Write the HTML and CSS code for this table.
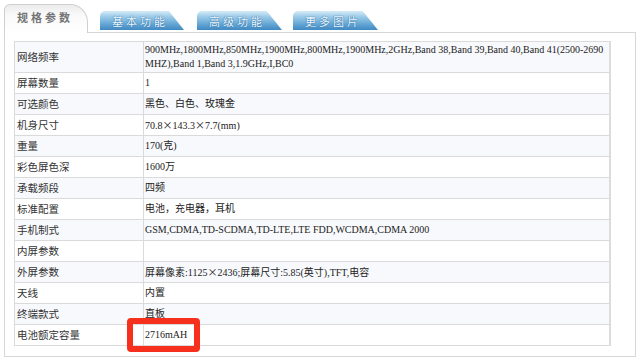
FILE: index.html
```html
<!DOCTYPE html>
<html lang="zh">
<head>
<meta charset="utf-8">
<link rel="stylesheet" href="styles.css">
</head>
<body>
<div class="page">
  <div class="tabs">
    <div class="tab tab-active">规格参数</div>
    <div class="tab tab-blue tab-1">基本功能</div>
    <div class="tab tab-blue tab-2">高级功能</div>
    <div class="tab tab-blue tab-3">更多图片</div>
  </div>
  <div class="panel">
    <table class="spec">
      <tr class="tall"><th>网络频率</th><td>900MHz,1800MHz,850MHz,1900MHz,800MHz,1900MHz,2GHz,Band 38,Band 39,Band 40,Band 41(2500-2690 MHZ),Band 1,Band 3,1.9GHz,I,BC0</td></tr>
      <tr><th>屏幕数量</th><td>1</td></tr>
      <tr><th>可选颜色</th><td>黑色、白色、玫瑰金</td></tr>
      <tr><th>机身尺寸</th><td>70.8<span class="mul">×</span>143.3<span class="mul">×</span>7.7(mm)</td></tr>
      <tr><th>重量</th><td>170(克)</td></tr>
      <tr><th>彩色屏色深</th><td>1600万</td></tr>
      <tr><th>承载频段</th><td>四频</td></tr>
      <tr><th>标准配置</th><td>电池，充电器，耳机</td></tr>
      <tr><th>手机制式</th><td>GSM,CDMA,TD-SCDMA,TD-LTE,LTE FDD,WCDMA,CDMA 2000</td></tr>
      <tr><th>内屏参数</th><td></td></tr>
      <tr><th>外屏参数</th><td>屏幕像素:1125<span class="mul">×</span>2436;屏幕尺寸:5.85(英寸),TFT,电容</td></tr>
      <tr><th>天线</th><td>内置</td></tr>
      <tr><th>终端款式</th><td>直板</td></tr>
      <tr><th>电池额定容量</th><td>2716mAH</td></tr>
    </table>
  </div>
  <div class="highlight"></div>
</div>
</body>
</html>
```
FILE: styles.css
```css
html, body {
  margin: 0;
  padding: 0;
  background: #ffffff;
}
.page {
  position: relative;
  width: 640px;
  height: 362px;
  font-family: "Liberation Serif", "Noto Sans CJK SC", serif;
}
.tabs {
  display: flex;
  align-items: flex-end;
  padding: 4px 0 0 4px;
  height: 28px;
  box-sizing: content-box;
}
.tab {
  box-sizing: border-box;
  display: flex;
  align-items: center;
  font-family: "Noto Sans CJK SC", sans-serif;
  font-size: 11px;
  letter-spacing: 3px;
}
.tab-active {
  position: relative;
  z-index: 2;
  width: 84px;
  height: 29px;
  margin-bottom: -1px;
  padding: 0 0 4px 12px;
  background: linear-gradient(#ececec, #fafafa 40%, #ffffff);
  border: 1px solid #cfcfcf;
  border-bottom: none;
  border-radius: 6px 18px 0 0;
  color: #757575;
  font-weight: bold;
}
.tab-blue {
  width: 85px;
  height: 19px;
  margin-bottom: 2px;
  padding: 0 0 0 12px;
  background: linear-gradient(#d6ecf7, #9ccbe8 30%, #63a5d4 70%, #4189c2);
  clip-path: polygon(0 0, 82% 0, 100% 100%, 0 100%);
  border-radius: 5px 0 0 0;
  color: #eef8fe;
  text-shadow: 0 0 1px #2f6fa6, 0 0 1px #2f6fa6;
}
.tab-1 { margin-left: 12px; width: 84px; }
.tab-2 { margin-left: 13px; }
.tab-3 { margin-left: 11px; }
.panel {
  margin-left: 4px;
  width: 632px;
  height: 325px;
  box-sizing: border-box;
  border: 1px solid #d6d6d6;
  padding: 8px 0 0 9px;
}
.spec {
  width: 597px;
  border-collapse: collapse;
  border: 1px solid #d4d4d4;
  border-right: 2px solid #dcdcdc;
  font-size: 10px;
  color: #222;
}
.spec tr {
  height: 21px;
}
.spec tr.tall {
  height: 31px;
}
.spec tr:nth-child(odd) {
  background: #f8f9fc;
}
.spec th,
.spec td {
  border: 1px solid #dadada;
  padding: 0 2px;
  vertical-align: middle;
  text-align: left;
  line-height: 14px;
}
.spec th {
  width: 124px;
  font-weight: normal;
  font-family: "Noto Sans CJK SC", sans-serif;
  font-size: 10.5px;
  color: #333;
}
.spec td {
  padding-left: 1px;
}
.mul {
  font-family: "Noto Sans CJK SC", sans-serif;
}
.highlight {
  position: absolute;
  left: 127px;
  top: 318px;
  width: 73px;
  height: 34px;
  box-sizing: border-box;
  border: 6px solid #f7301d;
  border-radius: 4px;
}
```
